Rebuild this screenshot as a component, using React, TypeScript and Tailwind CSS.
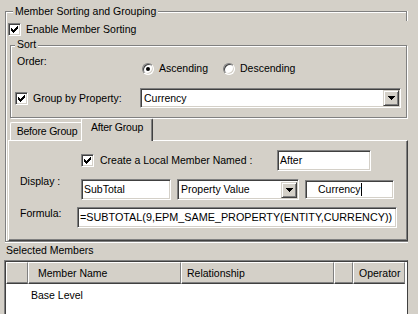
import React from "react";

// Win2k chrome pieces
const sunken =
  "border border-t-[#808080] border-l-[#808080] border-b-white border-r-white bg-white shadow-[inset_1px_1px_0_#404040,inset_-1px_-1px_0_#d4d0c8]";
const raised =
  "border border-t-[#d4d0c8] border-l-[#d4d0c8] border-b-[#404040] border-r-[#404040] bg-[#d4d0c8] shadow-[inset_1px_1px_0_#fff,inset_-1px_-1px_0_#808080]";

function CheckBox() {
  return (
    <span
      className={`flex h-[13px] w-[13px] shrink-0 items-center justify-center ${sunken}`}
    >
      <svg width="7" height="7" viewBox="0 0 7 7" shapeRendering="crispEdges">
        <path
          d="M0 2h1v3H0zM1 3h1v3H1zM2 4h1v3H2zM3 3h1v3H3zM4 2h1v3H4zM5 1h1v3H5zM6 0h1v3H6z"
          fill="#000"
        />
      </svg>
    </span>
  );
}

function Radio({ on }: { on?: boolean }) {
  return (
    <span className="flex h-[12px] w-[12px] shrink-0 items-center justify-center rounded-full border border-t-[#808080] border-l-[#808080] border-b-white border-r-white bg-white shadow-[inset_1px_1px_0_#404040,inset_-1px_-1px_0_#d4d0c8]">
      {on && <span className="h-[4px] w-[4px] rounded-full bg-black" />}
    </span>
  );
}

function DropButton() {
  return (
    <span className={`flex h-[16px] w-[16px] shrink-0 items-center justify-center ${raised}`}>
      <svg width="7" height="4" viewBox="0 0 7 4" shapeRendering="crispEdges">
        <path d="M0 0h7v1H0zM1 1h5v1H1zM2 2h3v1H2zM3 3h1v1H3z" fill="#000" />
      </svg>
    </span>
  );
}

function Combo({ value, className }: { value: string; className: string }) {
  return (
    <div className={`flex items-center p-[1px] ${sunken} ${className}`}>
      <span className="flex-1 truncate pl-[2px]">{value}</span>
      <DropButton />
    </div>
  );
}

function Field({
  value,
  className,
  children,
}: {
  value?: string;
  className: string;
  children?: React.ReactNode;
}) {
  return (
    <div className={`flex items-center overflow-hidden whitespace-nowrap ${sunken} ${className}`}>
      {value}
      {children}
    </div>
  );
}

function Legend({ children, className }: { children: React.ReactNode; className: string }) {
  return <span className={`block w-fit bg-[#d4d0c8] px-[2px] ${className}`}>{children}</span>;
}

export default function App() {
  return (
    <div className="h-[314px] w-[418px] overflow-hidden bg-[#d4d0c8] pt-[11px] font-['Liberation_Sans',Arial,sans-serif] text-[10.5px] leading-[13px] text-black">
      {/* Member Sorting and Grouping */}
      <div className="ml-[5px] h-[231px] w-[403px] border-t border-l border-b border-[#808080] shadow-[inset_1px_1px_0_#fff,0_1px_0_#fff]">
        <div className="-mt-[7px] flex items-start">
          <Legend className="ml-[7px]">Member Sorting and Grouping</Legend>
          <span className="-mb-[3px] ml-auto mt-[6px] h-[10px] w-[2px] border-l border-[#808080] bg-white" />
        </div>

        <div className="ml-[2px] mt-[5px] flex items-center gap-[5px]">
          <CheckBox />
          <span>Enable Member Sorting</span>
        </div>

        {/* Sort */}
        <div className="ml-[4px] mt-[9px] h-[73px] w-[397px] border border-[#808080] shadow-[inset_1px_1px_0_#fff,1px_1px_0_#fff]">
          <Legend className="-mt-[8px] ml-[4px]">Sort</Legend>
          <div className="mt-[4px] flex pl-[6px]">
            <span className="w-[125px]">Order:</span>
            <div className="mt-[7px] flex">
              <div className="flex w-[81px] items-center gap-[5px]">
                <Radio on />
                <span>Ascending</span>
              </div>
              <div className="flex items-center gap-[5px]">
                <Radio />
                <span>Descending</span>
              </div>
            </div>
          </div>
          <div className="ml-[4px] mt-[13px] flex h-[20px] items-center">
            <div className="flex w-[125px] items-center gap-[5px]">
              <CheckBox />
              <span>Group by Property:</span>
            </div>
            <Combo value="Currency" className="h-[20px] w-[261px]" />
          </div>
        </div>

        {/* Tabs */}
        <div className="ml-[2px] w-[400px]">
          <div className="flex h-[22px] items-end pl-[2px] tracking-[-0.2px]">
            <div className="h-[18px] w-[73px] rounded-tl-[2px] border-t border-l border-white pt-[2px] text-center shadow-[inset_-1px_0_0_#808080]">
              Before Group
            </div>
            <div className="relative z-10 -mb-[1px] -ml-[2px] h-[23px] w-[72px] rounded-t-[2px] border-t border-l border-r border-t-white border-l-white border-r-[#404040] bg-[#d4d0c8] pt-[2px] text-center shadow-[inset_-1px_0_0_#808080]">
              After Group
            </div>
          </div>
          <div className="h-[101px] border border-t-white border-l-white border-b-[#404040] border-r-[#404040] shadow-[inset_-1px_-1px_0_#808080]">
            <div className="ml-[72px] mt-[9px] flex h-[21px] items-center">
              <div className="flex w-[196px] items-center gap-[6px]">
                <CheckBox />
                <span>Create a Local Member Named :</span>
              </div>
              <Field value="After" className="h-[21px] w-[94px] pl-[2px]" />
            </div>
            <div className="ml-[11px] mt-[8px] flex items-start">
              <span className="-mt-[4px] w-[61px]">Display :</span>
              <Field value="SubTotal" className="h-[21px] w-[90px] pl-[2px]" />
              <Combo value="Property Value" className="ml-[6px] h-[21px] w-[122px]" />
              <Field className="ml-[6px] mt-[1px] h-[19px] w-[89px] pl-[12px]">
                Currency
                <span className="h-[13px] w-[1px] bg-black" />
              </Field>
            </div>
            <div className="ml-[11px] mt-[7px] flex items-start">
              <span className="w-[57px]">Formula:</span>
              <Field
                value="=SUBTOTAL(9,EPM_SAME_PROPERTY(ENTITY,CURRENCY))"
                className="h-[21px] w-[320px] pl-[2px] text-[10.8px]"
              />
            </div>
          </div>
        </div>
      </div>

      {/* Selected Members */}
      <div className="ml-[6px] mt-[2px]">Selected Members</div>
      <div className="ml-[4px] mt-[3px] h-[70px] w-[404px] border border-t-[#808080] border-l-[#808080] border-r-[#404040] border-b-white bg-white shadow-[inset_1px_1px_0_#404040]">
        <div className="ml-[1px] mt-[1px] flex h-[22px]">
          {[
            { label: "", w: "w-[22px]", pl: "pl-0" },
            { label: "Member Name", w: "w-[153px]", pl: "pl-[9px]" },
            { label: "Relationship", w: "w-[153px]", pl: "pl-[5px]" },
            { label: "", w: "w-[19px]", pl: "pl-0" },
            { label: "Operator", w: "w-[52px]", pl: "pl-[5px]" },
          ].map((c, i) => (
            <div
              key={i}
              className={`flex items-center border-t border-l border-r border-b border-t-white border-l-white border-r-[#808080] border-b-[#404040] bg-[#d4d0c8] shadow-[inset_0_-1px_0_#808080] ${c.w} ${c.pl}`}
            >
              {c.label}
            </div>
          ))}
        </div>
        <div className="pl-[26px] pt-[5px]">Base Level</div>
      </div>
    </div>
  );
}
